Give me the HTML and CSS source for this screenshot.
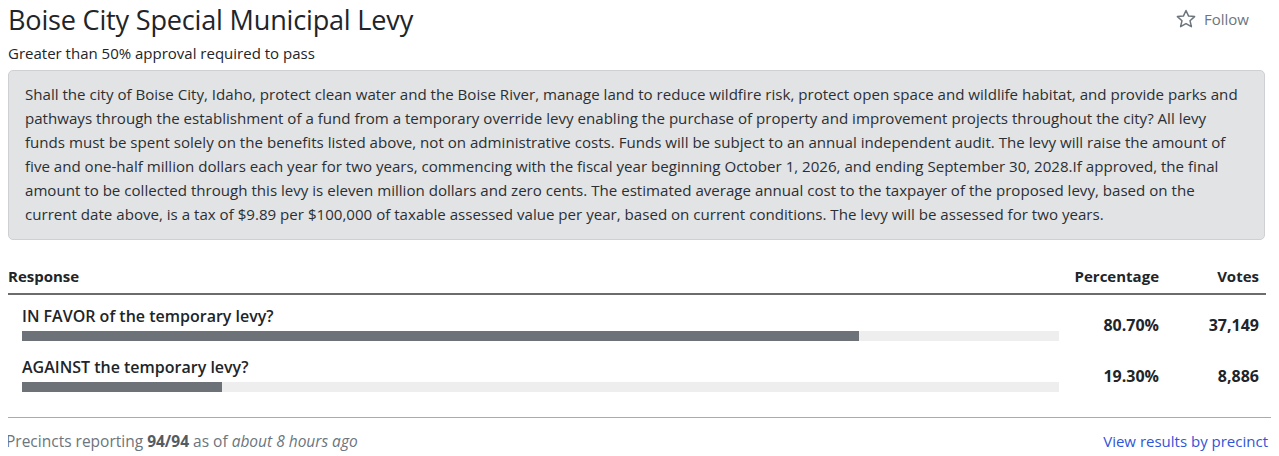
FILE: index.html
```html
<!DOCTYPE html>
<html lang="en">
<head>
<meta charset="utf-8">
<title>Boise City Special Municipal Levy</title>
<link rel="stylesheet" href="styles.css">
</head>
<body>
<div class="race">
  <div class="race-header">
    <h1 class="race-title">Boise City Special Municipal Levy</h1>
    <button class="follow" type="button">
      <svg class="star" width="20" height="20" viewBox="0 0 20 20" aria-hidden="true">
        <polygon points="10,1.5 12.6,7.1 18.6,7.6 14,11.7 15.4,17.7 10,14.6 4.6,17.7 6,11.7 1.4,7.6 7.4,7.1" fill="none" stroke="#6c757d" stroke-width="1.5" stroke-linejoin="round"/>
      </svg>
      <span>Follow</span>
    </button>
  </div>
  <div class="subtitle">Greater than 50% approval required to pass</div>
  <div class="question">Shall the city of Boise City, Idaho, protect clean water and the Boise River, manage land to reduce wildfire risk, protect open space and wildlife habitat, and provide parks and pathways through the establishment of a fund from a temporary override levy enabling the purchase of property and improvement projects throughout the city? All levy funds must be spent solely on the benefits listed above, not on administrative costs. Funds will be subject to an annual independent audit. The levy will raise the amount of five and one-half million dollars each year for two years, commencing with the fiscal year beginning October 1, 2026, and ending September 30, 2028.If approved, the final amount to be collected through this levy is eleven million dollars and zero cents. The estimated average annual cost to the taxpayer of the proposed levy, based on the current date above, is a tax of $9.89 per $100,000 of taxable assessed value per year, based on current conditions. The levy will be assessed for two years.</div>

  <div class="results">
    <div class="row head">
      <div class="cell c-resp">Response</div>
      <div class="cell c-num">Percentage</div>
      <div class="cell c-num">Votes</div>
    </div>
    <div class="row">
      <div class="cell c-resp">
        <div class="choice">IN FAVOR of the temporary levy?</div>
        <div class="bar"><div class="fill" style="width:80.70%"></div></div>
      </div>
      <div class="cell c-num val">80.70%</div>
      <div class="cell c-num val">37,149</div>
    </div>
    <div class="row">
      <div class="cell c-resp">
        <div class="choice">AGAINST the temporary levy?</div>
        <div class="bar"><div class="fill" style="width:19.30%"></div></div>
      </div>
      <div class="cell c-num val">19.30%</div>
      <div class="cell c-num val">8,886</div>
    </div>
  </div>

  <div class="footer">
    <div class="reporting">Precincts reporting <b>94/94</b> as of <i>about 8 hours ago</i></div>
    <a class="precinct-link" href="#">View results by precinct</a>
  </div>
</div>
</body>
</html>
```

FILE: styles.css
```css
html, body {
  margin: 0;
  padding: 0;
  background: #fff;
}
body {
  margin: 0 8px;
  font-family: "Open Sans", "Noto Sans", "Liberation Sans", sans-serif;
  color: #212529;
  font-size: 15px;
}
.race-header {
  display: flex;
  justify-content: space-between;
  align-items: flex-start;
  height: 42px;
}
.race-title {
  margin: 0;
  padding-top: 3px;
  font-size: 27.1px;
  font-weight: 400;
  line-height: 34px;
  letter-spacing: -0.2px;
}
.follow {
  display: flex;
  align-items: center;
  gap: 8px;
  margin: 8px 22px 0 0;
  padding: 0;
  border: 0;
  background: none;
  color: #6c757d;
  font-family: inherit;
  font-size: 15px;
  line-height: 22px;
}
.star { display: block; }
.subtitle {
  font-size: 15px;
  line-height: 22px;
}
.question {
  margin-top: 6px;
  margin-right: 6px;
  padding: 11px 16px 13px;
  background: #e2e3e5;
  border: 1px solid #cfd0d3;
  border-radius: 5px;
  line-height: 24px;
  font-size: 15.1px;
  color: #2b2f33;
}
.results {
  margin-top: 19px;
  margin-right: 5px;
}
.row {
  display: grid;
  grid-template-columns: 1fr 90px 100px;
  align-items: center;
  padding-right: 7px;
}
.row.head {
  border-bottom: 2px solid #6c6c6c;
  height: 34px;
  align-items: center;
  font-weight: 700;
  font-size: 15px;
}
.cell.c-num { text-align: right; }
.c-resp { padding: 0 10px 0 14px; }
.head .c-resp { padding-left: 0; }
.row:not(.head) {
  height: 51px;
}
.row:not(.head) .c-resp { padding-top: 6px; }
.choice {
  font-size: 16px;
  font-weight: 600;
  line-height: 20px;
}
.bar {
  margin-top: 5px;
  height: 10px;
  background: #eeeeee;
}
.fill {
  height: 100%;
  background: #6d7178;
}
.val {
  font-weight: 700;
  font-size: 16px;
  padding-top: 8px;
}
.footer {
  margin: 20px -8px 0;
  border-top: 1px solid #a5acb3;
  display: flex;
  justify-content: space-between;
  align-items: center;
  padding: 1px 11px 0 6px;
  height: 44px;
  font-size: 15.5px;
}
.reporting { color: #6c757d; }
.reporting b { color: #555b61; }
.precinct-link {
  color: #2f56d6;
  text-decoration: none;
  font-size: 15px;
}
```
